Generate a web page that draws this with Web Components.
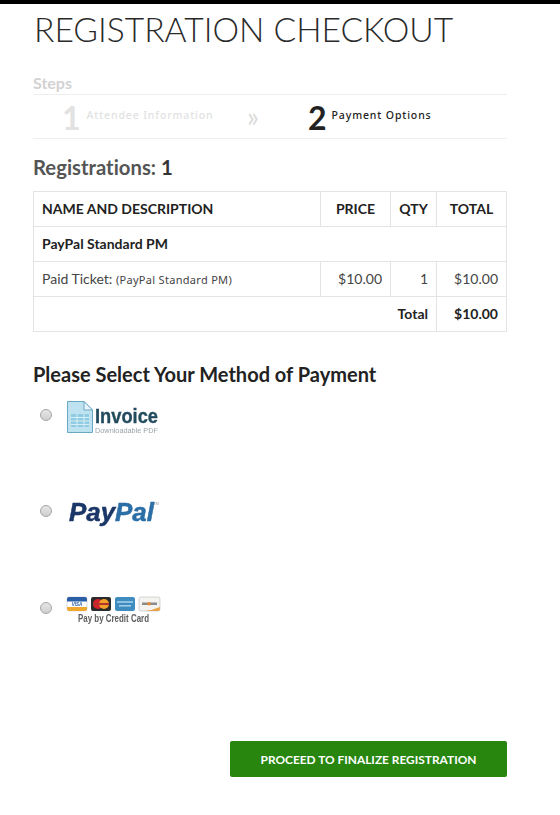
<!DOCTYPE html>
<html lang="en">
<head>
<meta charset="utf-8">
<title>Registration Checkout</title>
<style>
html, body {
  margin: 0;
  background: #fff;
  font-family: Lato, "Liberation Sans", sans-serif;
  font-variant-ligatures: none;
  color: #222;
}
</style>
</head>
<body>
<checkout-page>
  <page-title>REGISTRATION CHECKOUT</page-title>
  <step-bar>
    <step-item number="1" dim>Attendee Information</step-item>
    <step-item number="2">Payment Options</step-item>
  </step-bar>
  <reg-summary count="1"></reg-summary>
  <pay-methods>
    <pay-option><svg width="110" height="34" viewBox="0 0 110 34" role="img" aria-label="Invoice">
      <path d="M1.500 1.500H18L26.500 10V32.500H1.500Z" fill="#bfe2f0" stroke="#6aa9c4"/>
      <path d="M18 1.500V10H26.500Z" fill="#eaf6fb" stroke="#6aa9c4"/>
      <path d="M5 14H23V27H5Z" fill="#8fcbe2"/>
      <path d="M5 17.500H23M5 21H23M5 24.500H23M11 14V27M18 14V27" stroke="#d8eff7" fill="none"/>
      <text x="29" y="22.500" font-family="Liberation Sans Narrow, Liberation Sans, sans-serif" font-weight="700" font-size="21" fill="#234b5e" stroke="#234b5e" stroke-width=".35" textLength="63" lengthAdjust="spacingAndGlyphs">Invoice</text>
      <text x="29" y="33" font-family="Liberation Sans Narrow, Liberation Sans, sans-serif" font-size="7" fill="#9aa3a8" textLength="63" lengthAdjust="spacingAndGlyphs">Downloadable PDF</text>
    </svg></pay-option>
    <pay-option><svg width="110" height="34" viewBox="0 0 110 34" role="img" aria-label="PayPal">
      <text x="3" y="25" font-family="Liberation Sans, sans-serif" font-weight="700" font-style="italic" font-size="25" stroke-width=".5" textLength="85" lengthAdjust="spacingAndGlyphs"><tspan fill="#1b3768" stroke="#1b3768">Pay</tspan><tspan fill="#2c6ea6" stroke="#2c6ea6">Pal</tspan></text>
      <text x="87" y="9" font-family="Liberation Sans, sans-serif" font-size="4" fill="#8a9aa8">TM</text>
    </svg></pay-option>
    <pay-option><svg width="110" height="31" viewBox="0 0 110 31" role="img" aria-label="Pay by Credit Card">
      <g transform="translate(0 3)">
        <rect x="1" y="1" width="20" height="14" rx="2" fill="#fff" stroke="#c9c9c9" stroke-width=".6"/>
        <path d="M1 3a2 2 0 0 1 2-2h16a2 2 0 0 1 2 2v2.500H1Z" fill="#2a5fa8"/>
        <path d="M1 11H21V13a2 2 0 0 1-2 2H3a2 2 0 0 1-2-2Z" fill="#f0a92e"/>
        <text x="11" y="10" text-anchor="middle" font-family="Liberation Sans, sans-serif" font-weight="700" font-style="italic" font-size="4.500" fill="#2a5fa8">VISA</text>
        <rect x="25" y="1" width="20" height="14" rx="2" fill="#2b2b2b"/>
        <circle cx="32" cy="8" r="5" fill="#d4202a"/>
        <circle cx="38" cy="8" r="5" fill="#f0a12a"/>
        <rect x="27" y="7" width="16" height="2" fill="#b5322a"/>
        <rect x="49" y="1" width="20" height="14" rx="2" fill="#3f8dc0"/>
        <rect x="51" y="5" width="16" height="2" fill="#8cc2e2"/>
        <rect x="53" y="9" width="12" height="1.500" fill="#a5d2ea"/>
        <rect x="73" y="1" width="21" height="14" rx="2" fill="#f5f3ef" stroke="#bdbdbd" stroke-width=".6"/>
        <rect x="76" y="6.500" width="15" height="2.500" fill="#8c8c8c"/>
        <circle cx="83" cy="7.800" r="1.700" fill="#e98a2a"/>
        <path d="M79 15H92A2 2 0 0 0 94 13V11Q87 14 79 15Z" fill="#e9a14a"/>
      </g>
      <text x="47.500" y="29" text-anchor="middle" font-family="Liberation Sans Narrow, Liberation Sans, sans-serif" font-weight="700" font-size="10" fill="#5d5d5d" textLength="71" lengthAdjust="spacingAndGlyphs">Pay by Credit Card</text>
    </svg></pay-option>
  </pay-methods>
  <proceed-button>PROCEED TO FINALIZE REGISTRATION</proceed-button>
</checkout-page>

<template id="checkout-page-template">
  <style>
    :host {
      display: block;
      box-sizing: border-box;
      height: 815px;
      border-top: 4px solid #000;
      padding: 0 53px 0 33px;
    }
  </style>
  <slot></slot>
</template>

<template id="step-bar-template">
  <style>
    :host {
      display: block;
    }
    h3 {
      margin: 19px 0 0;
      height: 21px;
      font-size: 16px;
      line-height: 20px;
      font-weight: 700;
      color: #d2d2d2;
    }
    .steps {
      display: grid;
      grid-template-columns: 275px 1fr;
      align-items: center;
      height: 43px;
      border-top: 1px solid #eee;
      border-bottom: 1px solid #eee;
      position: relative;
    }
    .arrow {
      position: absolute;
      left: 214px;
      top: 6px;
      font-size: 28px;
      line-height: 30px;
      color: #dcdcdc;
    }
  </style>
  <h3>Steps</h3>
  <div class="steps">
    <slot></slot>
    <span class="arrow">»</span>
  </div>
</template>

<template id="step-item-template">
  <style>
    :host {
      display: flex;
      align-items: flex-start;
      gap: 5px;
      height: 43px;
      color: #222;
    }
    :host([dim]) {
      color: #e2e2e2;
      padding-left: 29px;
    }
    :host([dim]) .label {
      margin-left: 1px;
    }
    .number {
      font-size: 32px;
      line-height: 43px;
      font-weight: 700;
      margin-top: 1px;
    }
    .label {
      font-family: "Noto Sans", "Open Sans", sans-serif;
      font-size: 10.500px;
      font-weight: 500;
      letter-spacing: .87px;
      line-height: 40px;
    }
  </style>
  <span class="number"></span>
  <span class="label"><slot></slot></span>
</template>

<template id="reg-summary-template">
  <style>
    :host {
      display: block;
    }
    h2 {
      margin: 15px 0 11px;
      height: 26px;
      font-size: 20.300px;
      line-height: 26px;
      font-weight: 700;
      color: #555;
    }
    h2 span {
      color: #333;
    }
    table {
      width: 473px;
      table-layout: fixed;
      border-collapse: collapse;
      font-size: 14px;
      color: #222;
    }
    td, th {
      box-sizing: border-box;
      height: 35px;
      border: 1px solid #e4e4e4;
      padding: 0 8px;
      line-height: 20px;
    }
    th {
      font-size: 14px;
      font-weight: 700;
      text-align: center;
    }
    th:first-child {
      text-align: left;
    }
    .num {
      text-align: right;
      color: #444;
    }
    .strong {
      font-size: 14px;
      font-weight: 700;
      color: #222;
    }
    .ticket {
      color: #444;
    }
    small {
      font-family: "Noto Sans", "Open Sans", sans-serif;
      font-size: 11px;
      letter-spacing: .3px;
    }
  </style>
  <h2>Registrations: <span></span></h2>
  <table>
    <colgroup><col style="width:287px"><col style="width:70px"><col style="width:46px"><col style="width:70px"></colgroup>
    <tr><th>NAME AND DESCRIPTION</th><th>PRICE</th><th>QTY</th><th>TOTAL</th></tr>
    <tr><td class="strong" colspan="4">PayPal Standard PM</td></tr>
    <tr>
      <td class="ticket">Paid Ticket: <small>(PayPal Standard PM)</small></td>
      <td class="num">$10.00</td>
      <td class="num">1</td>
      <td class="num">$10.00</td>
    </tr>
    <tr>
      <td class="num strong" colspan="3">Total</td>
      <td class="num strong">$10.00</td>
    </tr>
  </table>
</template>

<template id="pay-methods-template">
  <style>
    :host {
      display: block;
    }
    h2 {
      margin: 28px 0 0;
      height: 28px;
      font-size: 20px;
      line-height: 28px;
      font-weight: 700;
      color: #222;
    }
    .list {
      display: grid;
      grid-auto-rows: 96.4px;
      padding-top: 12px;
    }
  </style>
  <h2>Please Select Your Method of Payment</h2>
  <div class="list"><slot></slot></div>
</template>

<template id="pay-option-template">
  <style>
    :host {
      display: flex;
      align-items: flex-start;
      gap: 14px;
      padding: 0 0 0 7px;
    }
    .radio {
      box-sizing: border-box;
      flex: none;
      width: 12px;
      height: 12px;
      margin-top: 9px;
      border: 1px solid #a6a6a6;
      border-radius: 50%;
      background: linear-gradient(#e6e6e6, #cfcfcf);
    }
    ::slotted(svg) {
      display: block;
      filter: blur(.3px);
    }
  </style>
  <span class="radio"></span>
  <slot></slot>
</template>

<template id="proceed-button-template">
  <style>
    :host {
      display: flex;
      justify-content: flex-end;
      margin-top: 52.300px;
    }
    button {
      box-sizing: border-box;
      width: 277px;
      height: 36px;
      border: 0;
      border-radius: 2px;
      background: #28860f;
      color: #fff;
      font-family: Lato, "Liberation Sans", sans-serif;
      font-size: 11.900px;
      font-weight: 700;
      padding: 0;
    }
  </style>
  <button type="button"><slot></slot></button>
</template>

<template id="page-title-template">
  <style>
    :host {
      display: block;
      height: 50px;
      margin: 0 0 0 1px;
      font-size: 33.600px;
      font-weight: 300;
      line-height: 50px;
      color: #2a2a2a;
    }
  </style>
  <slot></slot>
</template>

<script>
// every element just clones its own template into an open shadow root
class TemplateElement extends HTMLElement {
  constructor() {
    super();
    const template = document.getElementById(this.localName + '-template');
    this.attachShadow({ mode: 'open' }).appendChild(template.content.cloneNode(true));
  }
}

class StepItem extends TemplateElement {
  connectedCallback() {
    this.shadowRoot.querySelector('.number').textContent = this.getAttribute('number');
  }
}

class RegSummary extends TemplateElement {
  connectedCallback() {
    this.shadowRoot.querySelector('h2 span').textContent = this.getAttribute('count');
  }
}

for (const name of ['checkout-page', 'page-title', 'step-bar', 'pay-methods', 'pay-option', 'proceed-button']) {
  customElements.define(name, class extends TemplateElement {});
}
customElements.define('step-item', StepItem);
customElements.define('reg-summary', RegSummary);
</script>
</body>
</html>
